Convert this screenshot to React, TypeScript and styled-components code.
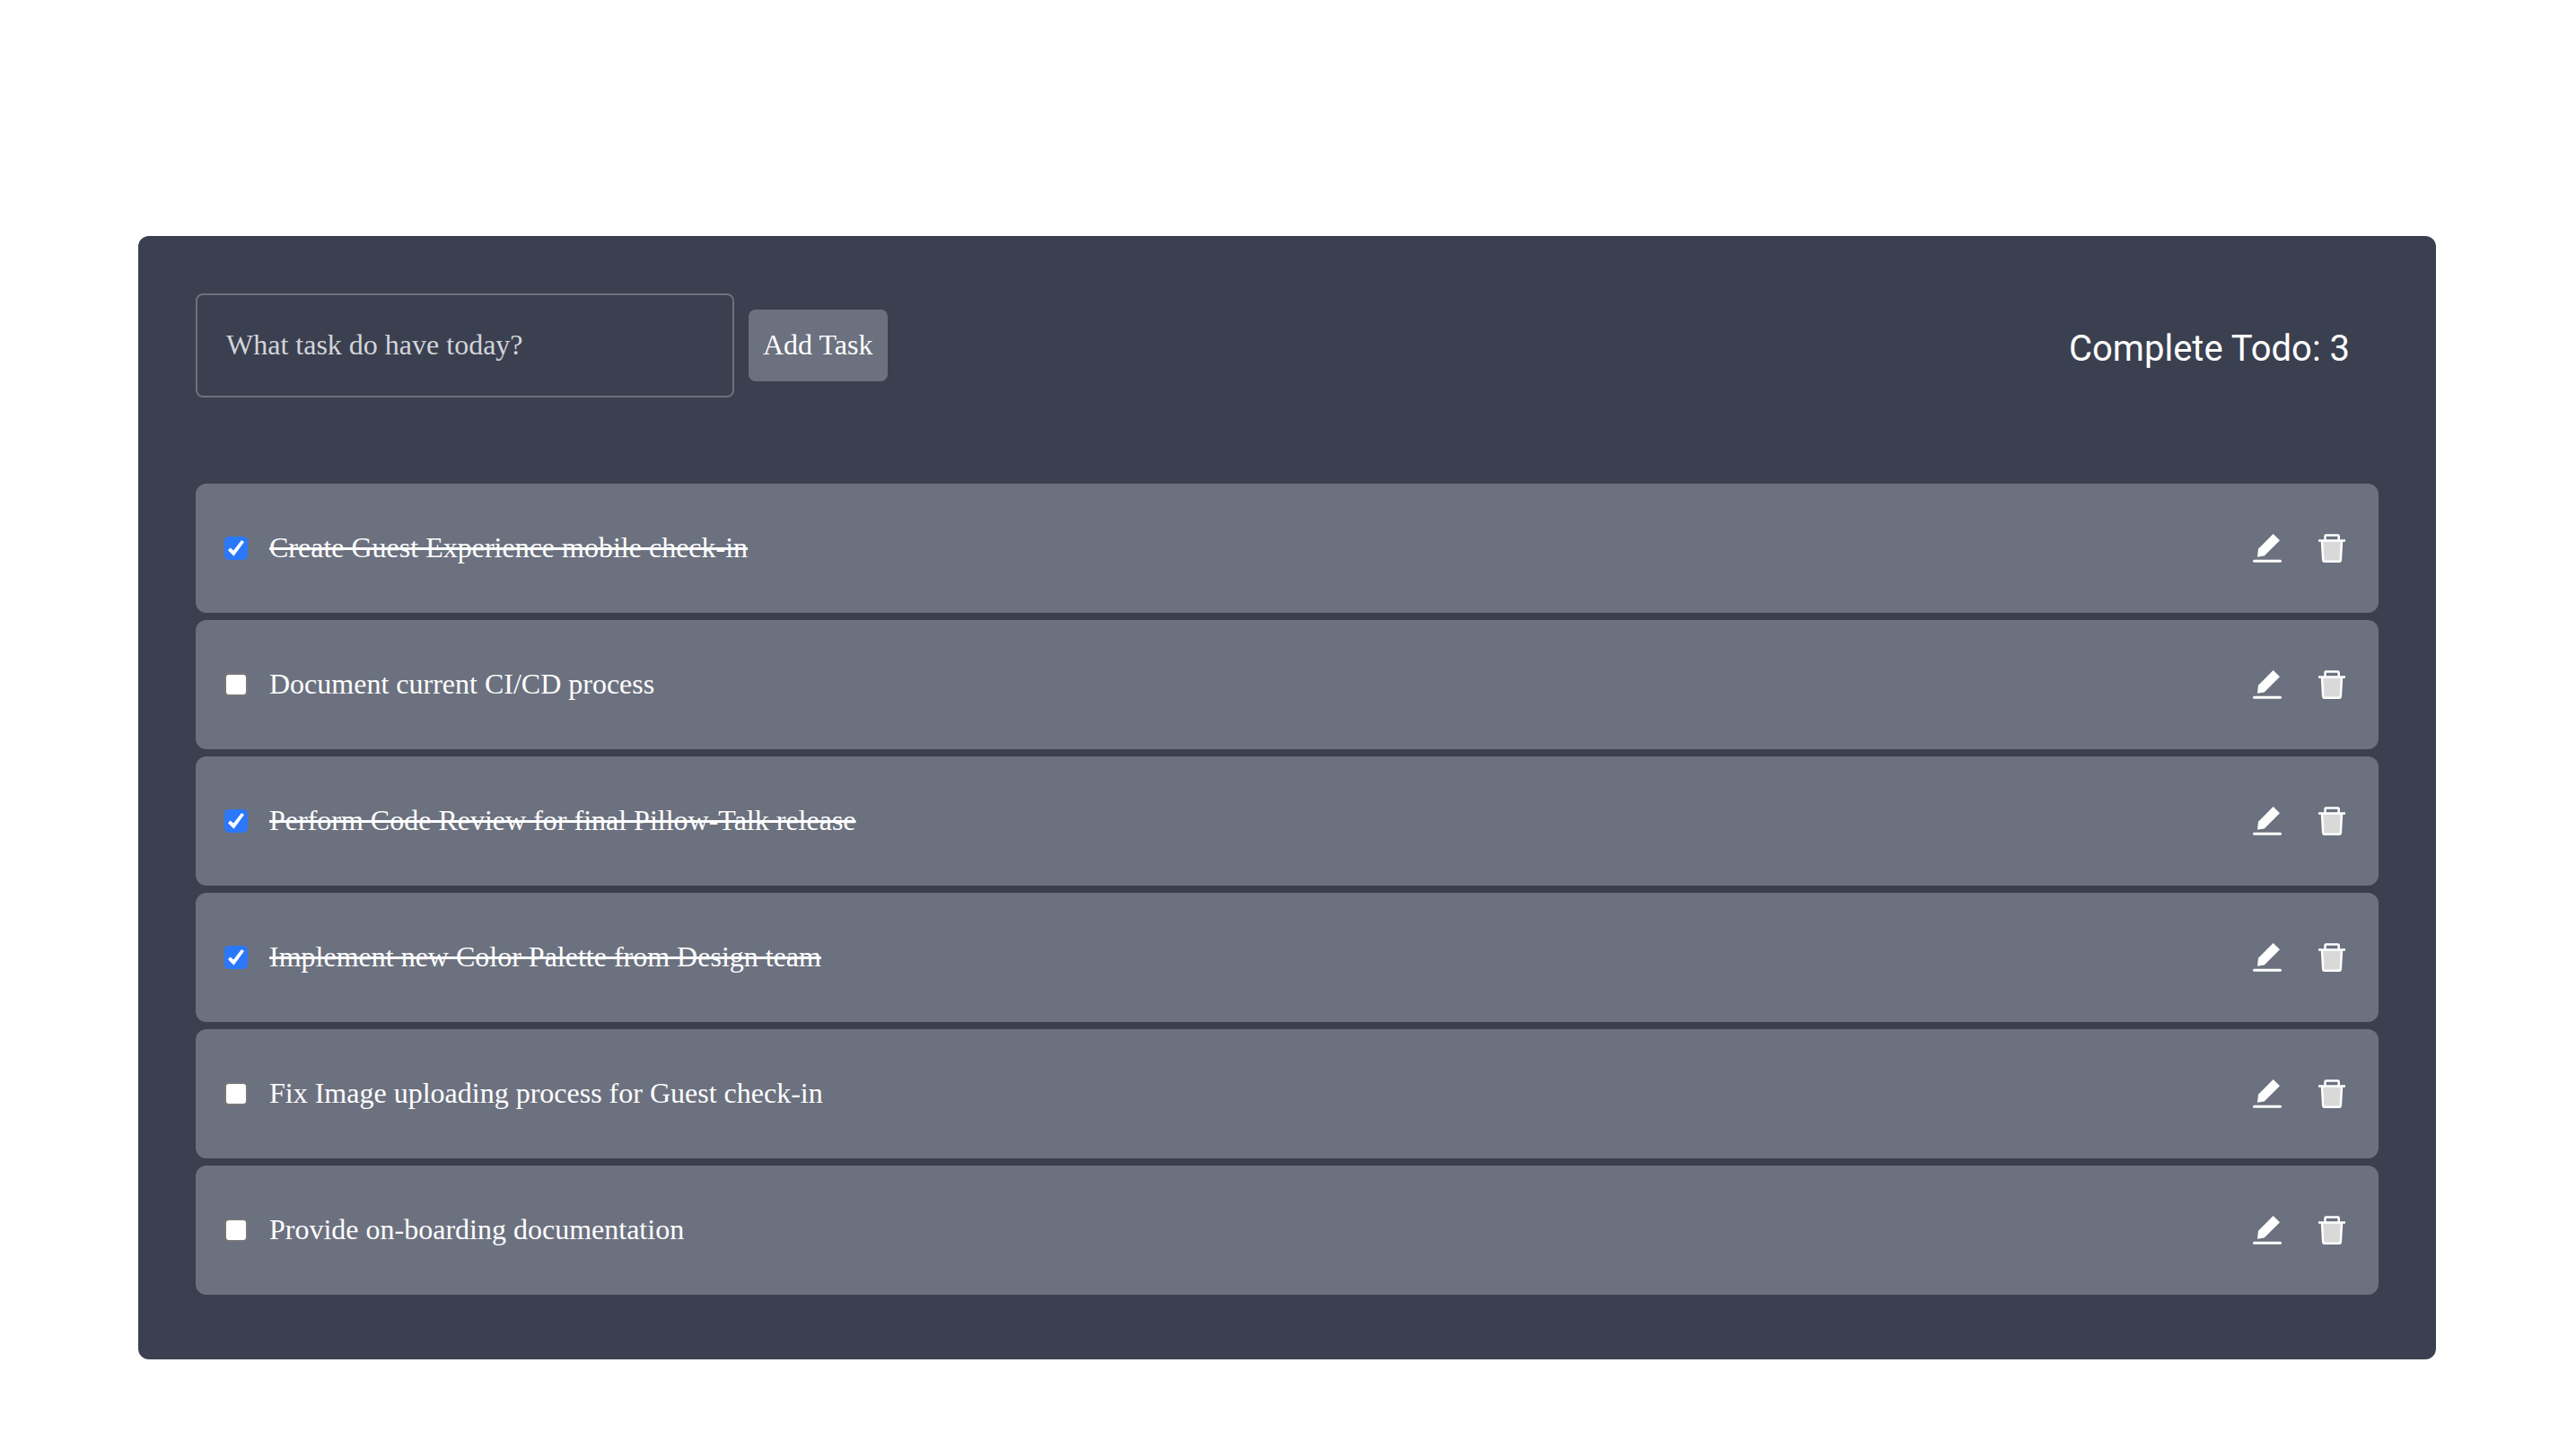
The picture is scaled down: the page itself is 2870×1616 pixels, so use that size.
import { useState } from "react";
import type { FormEvent } from "react";
import styled, { createGlobalStyle } from "styled-components";

const GlobalStyle = createGlobalStyle`
  *, *::before, *::after { box-sizing: border-box; }
  body {
    margin: 0;
    background: #ffffff;
    color: #ffffff;
    font-family: "Liberation Serif", "Times New Roman", serif;
    font-size: 32px;
    line-height: 48px;
  }
`;

const Page = styled.main`
  padding: 263px 66px 96px 64px;
`;

const Panel = styled.section`
  width: 100%;
  max-width: 2560px;
  margin: 0 auto;
  padding: 64px 64px 72px;
  border-radius: 12px;
  background: #3b4050;
`;

const Header = styled.header`
  display: flex;
  flex-wrap: wrap;
  align-items: center;
  justify-content: space-between;
  gap: 16px;
  margin-bottom: 96px;
`;

const TaskForm = styled.form`
  display: flex;
  flex-wrap: wrap;
  align-items: center;
  gap: 16px;
`;

const TaskInput = styled.input`
  width: 600px;
  max-width: 100%;
  height: 116px;
  padding: 0 32px 2px;
  border: 2px solid #6c717f;
  border-radius: 8px;
  background: transparent;
  color: #ffffff;
  font: inherit;
  &::placeholder {
    color: #d2d5da;
    opacity: 1;
  }
`;

const AddButton = styled.button`
  padding: 15px 16px 17px;
  border: 0;
  border-radius: 8px;
  background: #6c717f;
  color: #ffffff;
  font: inherit;
  cursor: pointer;
`;

const Summary = styled.h1`
  margin: 0;
  padding: 8px 32px 0;
  font-family: Roboto, "Liberation Sans", sans-serif;
  font-size: 40px;
  font-weight: 400;
  line-height: 56px;
`;

const TaskList = styled.ul`
  display: flex;
  flex-direction: column;
  gap: 8px;
  margin: 0;
  padding: 0;
  list-style: none;
`;

const TaskRow = styled.li`
  display: flex;
  align-items: center;
  justify-content: space-between;
  gap: 32px;
  padding: 48px 32px;
  border-radius: 12px;
  background: #6c717f;
`;

const TaskLabel = styled.label<{ $done: boolean }>`
  display: flex;
  align-items: center;
  gap: 24px;
  cursor: pointer;
  span {
    padding-bottom: 2px;
    line-height: 46px;
    text-decoration: ${(p) => (p.$done ? "line-through" : "none")};
    text-decoration-thickness: 3px;
  }
`;

const Tick = styled.input`
  appearance: none;
  display: grid;
  place-content: center;
  flex: none;
  width: 26px;
  height: 26px;
  margin: 0;
  border: 2px solid #767676;
  border-radius: 5px;
  background: #ffffff;
  &:checked {
    border-color: #2a78f9;
    background: #2a78f9;
  }
  &:checked::before {
    content: "";
    width: 18px;
    height: 18px;
    background: #ffffff;
    clip-path: polygon(0 62%, 14% 47%, 34% 64%, 84% 0, 100% 11%, 36% 99%);
  }
`;

const Actions = styled.div`
  display: flex;
  gap: 32px;
`;

const IconButton = styled.button`
  display: flex;
  padding: 0;
  border: 0;
  background: none;
  color: inherit;
  cursor: pointer;
`;

const Icon = styled.svg`
  width: 40px;
  height: 40px;
`;

function EditIcon() {
  return (
    <Icon viewBox="0 0 40 40" aria-hidden="true">
      <path d="M26.700 4 34 11.300 16.700 28.400 9 29.700 10 20.700Z" fill="currentColor" />
      <path d="M5.500 34.200h29" stroke="currentColor" strokeWidth="3" strokeLinecap="round" />
    </Icon>
  );
}

function TrashIcon() {
  return (
    <Icon viewBox="0 0 40 40" aria-hidden="true">
      <path d="M9 12h22l-1 22h-20Z" fill="#d9d9d9" />
      <path
        d="M5 11.500h30M12.500 11.500v-5q0-1 1-1h13.200q1 0 1 1v5M9 12l1.200 21q.1 1.700 1.700 1.700h16.200q1.600 0 1.700-1.700l1.200-21"
        fill="none"
        stroke="currentColor"
        strokeWidth="2.500"
      />
    </Icon>
  );
}

const initialTasks = [
  { id: 1, title: "Create Guest Experience mobile check-in", done: true },
  { id: 2, title: "Document current CI/CD process", done: false },
  { id: 3, title: "Perform Code Review for final Pillow-Talk release", done: true },
  { id: 4, title: "Implement new Color Palette from Design team", done: true },
  { id: 5, title: "Fix Image uploading process for Guest check-in", done: false },
  { id: 6, title: "Provide on-boarding documentation", done: false },
];

export default function App() {
  const [tasks, setTasks] = useState(initialTasks);
  const [draft, setDraft] = useState("");

  const addTask = (event: FormEvent) => {
    event.preventDefault();
    const title = draft.trim();
    if (!title) return;
    setTasks([...tasks, { id: Date.now(), title, done: false }]);
    setDraft("");
  };

  const toggle = (id: number) =>
    setTasks(tasks.map((t) => (t.id === id ? { ...t, done: !t.done } : t)));

  const remove = (id: number) => setTasks(tasks.filter((t) => t.id !== id));

  const edit = (id: number, current: string) => {
    const title = window.prompt("Edit task", current);
    if (title) setTasks(tasks.map((t) => (t.id === id ? { ...t, title } : t)));
  };

  return (
    <>
      <GlobalStyle />
      <Page>
        <Panel>
          <Header>
            <TaskForm onSubmit={addTask}>
              <TaskInput
                aria-label="New task"
                placeholder="What task do have today?"
                value={draft}
                onChange={(e) => setDraft(e.target.value)}
              />
              <AddButton type="submit">Add Task</AddButton>
            </TaskForm>
            <Summary>Complete Todo: {tasks.filter((t) => t.done).length}</Summary>
          </Header>
          <TaskList>
            {tasks.map((task) => (
              <TaskRow key={task.id}>
                <TaskLabel $done={task.done}>
                  <Tick type="checkbox" checked={task.done} onChange={() => toggle(task.id)} />
                  <span>{task.title}</span>
                </TaskLabel>
                <Actions>
                  <IconButton type="button" aria-label="Edit" onClick={() => edit(task.id, task.title)}>
                    <EditIcon />
                  </IconButton>
                  <IconButton type="button" aria-label="Delete" onClick={() => remove(task.id)}>
                    <TrashIcon />
                  </IconButton>
                </Actions>
              </TaskRow>
            ))}
          </TaskList>
        </Panel>
      </Page>
    </>
  );
}
